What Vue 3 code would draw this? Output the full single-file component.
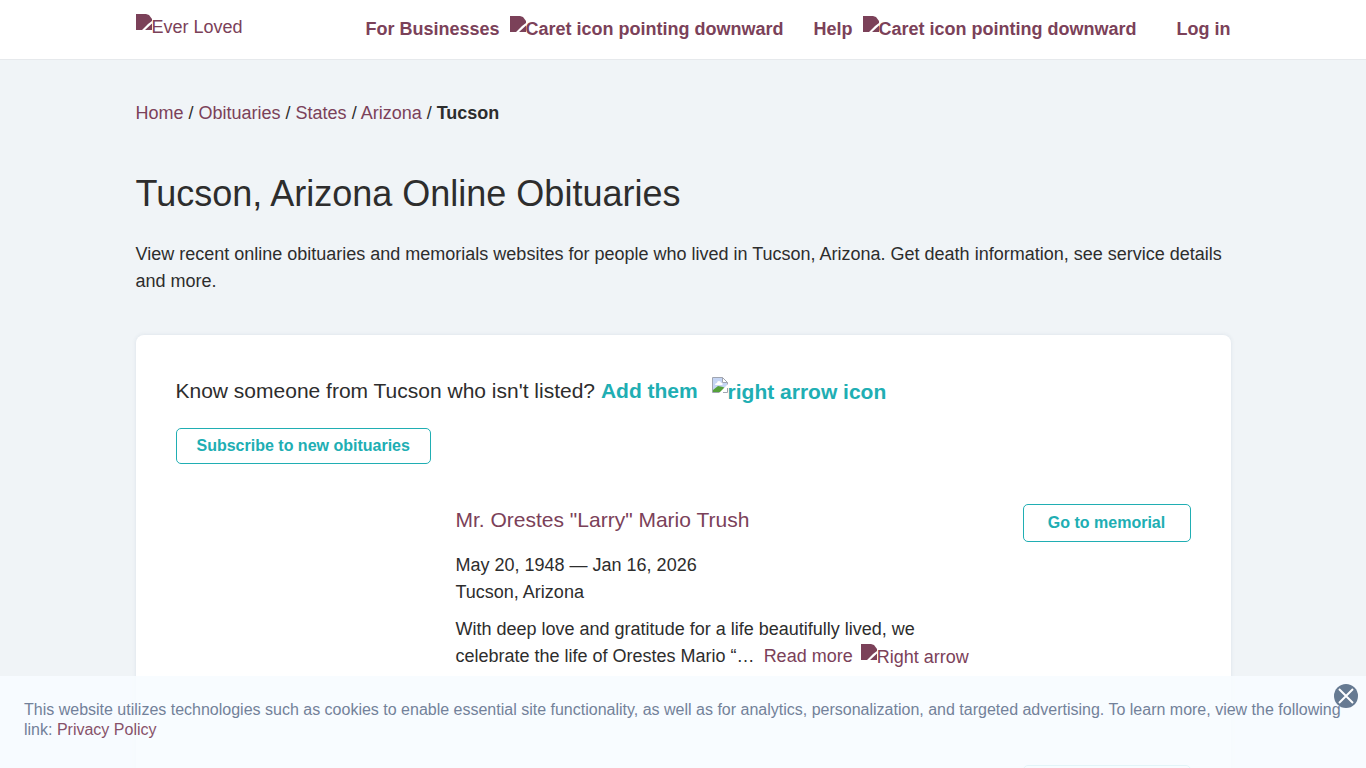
<template>
  <div class="page">
    <header class="site-header">
      <div class="container header-inner">
        <a class="logo" href="#"><svg class="icon" viewBox="0 0 16 16" aria-hidden="true"><path :d="solidIcon" /></svg>Ever Loved</a>
        <nav class="nav">
          <a v-for="item in navItems" :key="item" class="nav-link" href="#">
            <span>{{ item }}</span>
            <span class="caret"><svg class="icon" viewBox="0 0 16 16" aria-hidden="true"><path :d="solidIcon" /></svg>Caret icon pointing downward</span>
          </a>
          <a class="nav-link login" href="#">Log in</a>
        </nav>
      </div>
    </header>

    <main class="container">
      <nav class="breadcrumbs">
        <template v-for="crumb in crumbs" :key="crumb"><a href="#">{{ crumb }}</a> / </template>
        <strong>Tucson</strong>
      </nav>
      <h1>Tucson, Arizona Online Obituaries</h1>
      <p class="intro">
        View recent online obituaries and memorials websites for people who lived in Tucson, Arizona.
        Get death information, see service details and more.
      </p>

      <section class="card">
        <p class="add-line">
          Know someone from Tucson who isn't listed?
          <a class="add-link" href="#">Add them
            <span class="arrow"><svg class="icon page-icon" viewBox="0 0 16 16" aria-hidden="true">
              <path d="M1 1h9v5h5v3l-6 6H1z" fill="#c5d5f4" />
              <path d="M3 8a2 2 0 0 1 2-2 2 2 0 0 1 4 0 1 1 0 0 1 1 2z" fill="#fff" />
              <path d="M1 15v-2l5-4 5 1 2 1-4 4z" fill="#55a13a" />
              <path d="M.5 15.500V.5h10l5 5V8M.5 15.500H8" fill="none" stroke="#a0a5b0" />
              <path d="M10.500.500v5h5z" fill="#fff" stroke="#a0a5b0" />
              <path d="M16 7v3l-6 6H7z" fill="#fff" />
              <path d="M15.500 11v4.500H11" fill="none" stroke="#a0a5b0" />
            </svg>right arrow icon</span>
          </a>
        </p>
        <button class="btn subscribe" type="button">Subscribe to new obituaries</button>

        <article v-for="memorial in memorials" :key="memorial.id" class="memorial">
          <div class="photo"></div>
          <div class="details">
            <template v-if="memorial.name">
              <h2><a href="#">{{ memorial.name }}</a></h2>
              <div>{{ memorial.dates }}</div>
              <div>{{ memorial.place }}</div>
              <p class="excerpt">
                {{ memorial.excerpt }}
                <a class="read-more" href="#">Read more
                  <span class="more-arrow"><svg class="icon" viewBox="0 0 16 16" aria-hidden="true"><path :d="solidIcon" /></svg>Right arrow</span>
                </a>
              </p>
            </template>
          </div>
          <button class="btn go" type="button">Go to memorial</button>
        </article>
      </section>
    </main>

    <div v-if="showCookies" class="cookie-bar">
      <p>
        This website utilizes technologies such as cookies to enable essential site functionality, as well as for
        analytics, personalization, and targeted advertising. To learn more, view the following link:
        <a href="#">Privacy Policy</a>
      </p>
      <button class="close" type="button" aria-label="Close" @click="showCookies = false">
        <svg viewBox="0 0 24 24" aria-hidden="true">
          <circle cx="12" cy="12" r="12" />
          <path d="M5 5l14 14M19 5L5 19" />
        </svg>
      </button>
    </div>
  </div>
</template>

<script setup>
import { ref } from 'vue'

const showCookies = ref(true)

const solidIcon = 'M0 0h10l3 1 3 4v2l-4 3-6 6H0zM16 9.500V16H9z'

const navItems = ['For Businesses', 'Help']
const crumbs = ['Home', 'Obituaries', 'States', 'Arizona']

const memorials = [
  {
    id: 1,
    name: 'Mr. Orestes "Larry" Mario Trush',
    dates: 'May 20, 1948 — Jan 16, 2026',
    place: 'Tucson, Arizona',
    excerpt: 'With deep love and gratitude for a life beautifully lived, we celebrate the life of Orestes Mario “…'
  },
  { id: 2 }
]
</script>

<style>
body {
  background: #f0f4f7;
}
</style>

<style scoped>
.page {
  color: #2d2d2d;
  font-family: "Liberation Sans", Arial, sans-serif;
  font-size: 18px;
  line-height: 27px;
}

a {
  color: #7b4159;
  text-decoration: none;
}

.container {
  box-sizing: border-box;
  margin: 0 auto;
  max-width: 1135px;
  padding: 0 20px;
}

.icon {
  fill: #7b4159;
  height: 16px;
  vertical-align: 3px;
  width: 16px;
}

.page-icon {
  vertical-align: 6px;
}

.site-header {
  background: #fff;
  border-bottom: 1px solid #e6e9ec;
}

.header-inner {
  display: flex;
  height: 59px;
  justify-content: space-between;
}

.logo {
  padding-top: 14px;
}

.nav {
  display: flex;
  font-weight: 700;
  gap: 30px;
  padding-top: 16px;
}

.nav-link {
  display: flex;
  gap: 10px;
}

.login {
  margin-left: 10px;
}

.breadcrumbs {
  padding-top: 40px;
}

h1 {
  font-size: 36px;
  font-weight: 400;
  line-height: 54px;
  margin: 40px 0 20px;
}

.intro {
  margin: 0 0 40px;
}

.card {
  background: #fff;
  border-radius: 8px;
  box-shadow: 0 0 4px rgba(70, 100, 130, 0.12);
  padding: 40px;
}

.add-line {
  font-size: 21px;
  line-height: 32px;
  margin: 0 0 20px;
}

.add-link {
  color: #20aeb3;
  font-weight: 700;
}

.arrow {
  margin-left: 8px;
  vertical-align: -1px;
}

.btn {
  background: #fff;
  border: 1px solid #20aeb3;
  border-radius: 5px;
  color: #20aeb3;
  cursor: pointer;
  font-family: inherit;
  font-size: 16px;
  font-weight: 700;
}

.subscribe {
  display: block;
  height: 36px;
  padding: 0 20px;
}

.memorial {
  align-items: flex-start;
  display: flex;
  gap: 40px;
  margin-top: 40px;
  min-height: 221px;
}

.photo {
  flex: 0 0 240px;
}

.details {
  flex: 1;
}

h2 {
  font-size: 21px;
  font-weight: 400;
  line-height: 32px;
  margin: 0 0 16px;
}

.excerpt {
  margin: 10px 0 0;
}

.read-more {
  margin-left: 4px;
  white-space: nowrap;
}

.more-arrow {
  margin-left: 3px;
  vertical-align: -1px;
}

.go {
  flex: 0 0 168px;
  height: 38px;
}

.cookie-bar {
  background: #f8fcff;
  bottom: 0;
  box-sizing: border-box;
  color: #64748f;
  font-size: 16px;
  left: 0;
  line-height: 20px;
  min-height: 92px;
  opacity: 0.9;
  padding: 24px;
  position: fixed;
  right: 0;
}

.cookie-bar p {
  margin: 0;
}

.close {
  background: none;
  border: 0;
  cursor: pointer;
  height: 24px;
  padding: 0;
  position: absolute;
  right: 8px;
  top: 8px;
  width: 24px;
}

.close svg {
  display: block;
}

.close circle {
  fill: #576d87;
}

.close path {
  fill: none;
  stroke: #fff;
  stroke-width: 2;
}
</style>
